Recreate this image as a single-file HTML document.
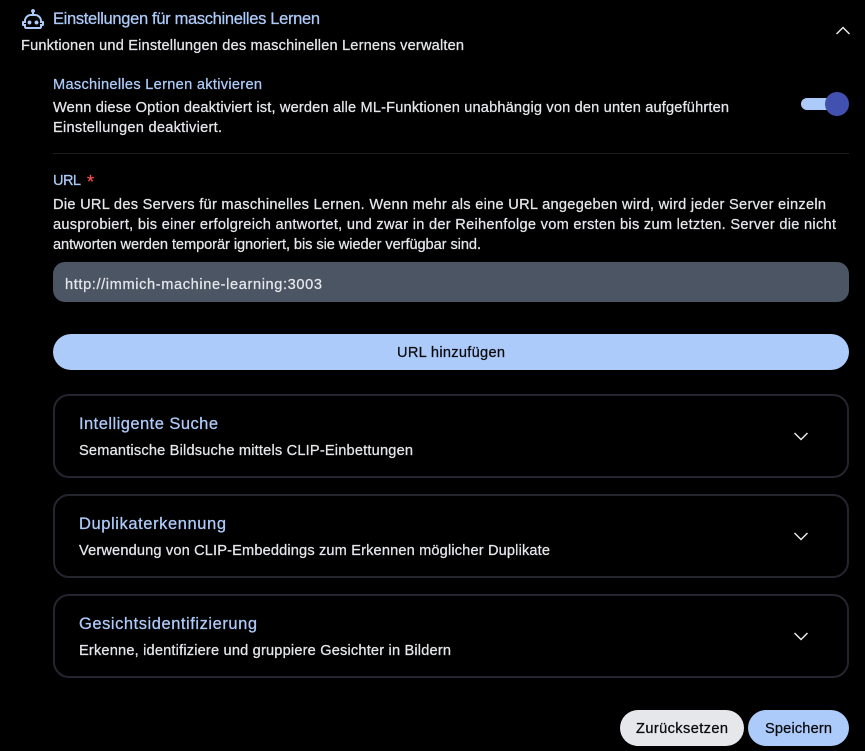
<!DOCTYPE html>
<html lang="de">
<head>
<meta charset="utf-8">
<title>Einstellungen für maschinelles Lernen</title>
<style>
html,body{margin:0;padding:0;background:#000;width:865px;height:751px;overflow:hidden}
body{position:relative;font-family:"Liberation Sans",sans-serif}
.box{position:absolute;box-sizing:border-box}
svg{position:absolute;left:0;top:0}
text{font-family:"Liberation Sans",sans-serif;font-size:14.6px;fill:#e5e7eb;stroke:#e5e7eb;stroke-width:.25px}
.p{fill:#adcbfa;stroke:#adcbfa}
.t{font-size:16.5px}
.d{fill:#0b0b0f;stroke:#0b0b0f}
</style>
</head>
<body>
<div class="box" style="left:53px;top:153px;width:796px;height:1px;background:#1f1f22"></div>
<div class="box" style="left:53px;top:262px;width:796px;height:40px;border-radius:12px;background:#4b5563"></div>
<div class="box" style="left:53px;top:334px;width:796px;height:36px;border-radius:18px;background:#adcbfa"></div>
<div class="box" style="left:53px;top:394px;width:796px;height:84px;border-radius:16px;border:2px solid #23262e"></div>
<div class="box" style="left:53px;top:494px;width:796px;height:84px;border-radius:16px;border:2px solid #23262e"></div>
<div class="box" style="left:53px;top:594px;width:796px;height:84px;border-radius:16px;border:2px solid #23262e"></div>
<div class="box" style="left:620px;top:710px;width:124px;height:36px;border-radius:18px;background:#e5e7eb"></div>
<div class="box" style="left:748px;top:710px;width:101px;height:36px;border-radius:18px;background:#adcbfa"></div>
<div class="box" style="left:801px;top:98px;width:36px;height:12px;border-radius:6px;background:#adcbfa"></div>
<div class="box" style="left:825px;top:92px;width:24px;height:24px;border-radius:50%;background:#4250af"></div>

<svg width="865" height="751" viewBox="0 0 865 751">
  <g transform="translate(21 7)"><path fill="#adcbfa" d="M17.5 15.5C17.5 16.61 16.61 17.5 15.5 17.5S13.5 16.61 13.5 15.5 14.4 13.5 15.5 13.5 17.5 14.4 17.5 15.5M8.5 13.5C7.4 13.5 6.5 14.4 6.5 15.5S7.4 17.5 8.5 17.5 10.5 16.61 10.5 15.5 9.61 13.5 8.5 13.5M23 15V18C23 18.55 22.55 19 22 19H21V20C21 21.11 20.11 22 19 22H5C3.9 22 3 21.11 3 20V19H2C1.45 19 1 18.55 1 18V15C1 14.45 1.45 14 2 14H3C3 10.13 6.13 7 10 7H11V5.73C10.4 5.39 10 4.74 10 4C10 2.9 10.9 2 12 2S14 2.9 14 4C14 4.74 13.6 5.39 13 5.73V7H14C17.87 7 21 10.13 21 14H22C22.55 14 23 14.45 23 15M21 16H19V14C19 11.24 16.76 9 14 9H10C7.24 9 5 11.24 5 14V16H3V17H5V20H19V17H21V16Z"/></g>
  <g fill="none" stroke="#e5e7eb" stroke-width="1.5">
    <path d="M836.5 34L843 27.5L849.5 34"/>
    <path d="M794.5 433L801 439.5L807.5 433"/>
    <path d="M794.5 533L801 539.5L807.5 533"/>
    <path d="M794.5 633L801 639.5L807.5 633"/>
  </g>

  <text class="p t" x="53" y="24" textLength="267" lengthAdjust="spacing">Einstellungen für maschinelles Lernen</text>
  <text x="21" y="50" textLength="443" lengthAdjust="spacing">Funktionen und Einstellungen des maschinellen Lernens verwalten</text>
  <text class="p" x="53" y="89" textLength="209" lengthAdjust="spacing">Maschinelles Lernen aktivieren</text>
  <text x="53" y="112" textLength="676" lengthAdjust="spacing">Wenn diese Option deaktiviert ist, werden alle ML-Funktionen unabhängig von den unten aufgeführten</text>
  <text x="53" y="132" textLength="169" lengthAdjust="spacing">Einstellungen deaktiviert.</text>
  <text class="p" x="53" y="185" textLength="28" lengthAdjust="spacing">URL</text>
  <text x="87" y="188" style="fill:#f25050;stroke:#f25050;font-size:18px">*</text>
  <text x="53" y="209" textLength="773" lengthAdjust="spacing">Die URL des Servers für maschinelles Lernen. Wenn mehr als eine URL angegeben wird, wird jeder Server einzeln</text>
  <text x="53" y="229" textLength="783" lengthAdjust="spacing">ausprobiert, bis einer erfolgreich antwortet, und zwar in der Reihenfolge vom ersten bis zum letzten. Server die nicht</text>
  <text x="53" y="249" textLength="428" lengthAdjust="spacing">antworten werden temporär ignoriert, bis sie wieder verfügbar sind.</text>
  <text x="65" y="289" textLength="257" lengthAdjust="spacing">http://immich-machine-learning:3003</text>
  <text class="d" x="397" y="357" textLength="108" lengthAdjust="spacing">URL hinzufügen</text>

  <text class="p t" x="79" y="429" textLength="139" lengthAdjust="spacing">Intelligente Suche</text>
  <text x="79" y="455" textLength="334" lengthAdjust="spacing">Semantische Bildsuche mittels CLIP-Einbettungen</text>
  <text class="p t" x="79" y="529" textLength="147" lengthAdjust="spacing">Duplikaterkennung</text>
  <text x="79" y="555" textLength="471" lengthAdjust="spacing">Verwendung von CLIP-Embeddings zum Erkennen möglicher Duplikate</text>
  <text class="p t" x="79" y="629" textLength="178" lengthAdjust="spacing">Gesichtsidentifizierung</text>
  <text x="79" y="655" textLength="372" lengthAdjust="spacing">Erkenne, identifiziere und gruppiere Gesichter in Bildern</text>

  <text class="d" x="636" y="733" textLength="92" lengthAdjust="spacing">Zurücksetzen</text>
  <text class="d" x="765" y="733" textLength="67" lengthAdjust="spacing">Speichern</text>
</svg>
</body>
</html>
